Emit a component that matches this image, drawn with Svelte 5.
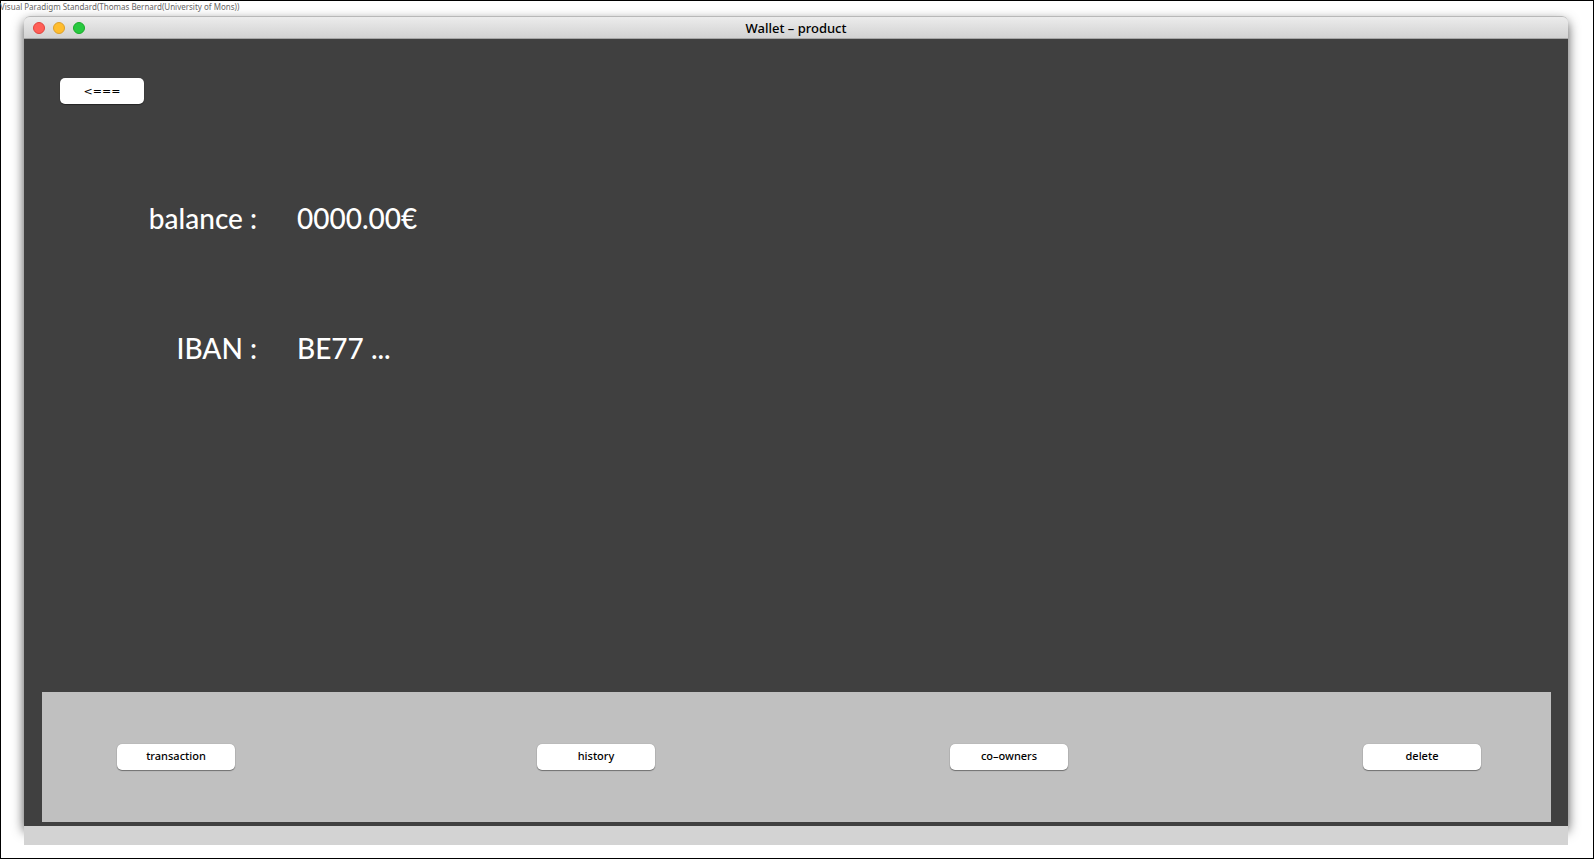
<script>
  const fields = [
    { label: 'balance :', value: '0000.00€' },
    { label: 'IBAN :', value: 'BE77 ...' }
  ];
  const actions = ['transaction', 'history', 'co–owners', 'delete'];
</script>

<div class="page">
  <p class="credit">Visual Paradigm Standard(Thomas Bernard(University of Mons))</p>
  <div class="frame">
    <section class="window">
      <header class="titlebar">
        <div class="lights">
          <button class="light close" aria-label="Close"></button>
          <button class="light minimize" aria-label="Minimize"></button>
          <button class="light zoom" aria-label="Zoom"></button>
        </div>
        <h1>Wallet – product</h1>
      </header>
      <main>
        <button class="btn back">&lt;===</button>
        <dl>
          {#each fields as field}
            <div class="field">
              <dt>{field.label}</dt>
              <dd>{field.value}</dd>
            </div>
          {/each}
        </dl>
        <nav>
          {#each actions as action}
            <button class="btn">{action}</button>
          {/each}
        </nav>
      </main>
    </section>
    <footer></footer>
  </div>
</div>

<style>
  :global(body) {
    background: #fff;
  }
  .page {
    box-sizing: border-box;
    min-height: 100vh;
    display: flex;
    flex-direction: column;
    border: 1px solid #000;
    padding: 0 25px 13px 23px;
    font-family: 'Noto Sans', 'Open Sans', sans-serif;
  }
  .credit {
    margin: 0 0 0 -24px;
    height: 15px;
    line-height: 12px;
    font-size: 8px;
    color: #666;
    white-space: nowrap;
  }
  .frame {
    flex: 1;
    display: flex;
    flex-direction: column;
  }
  .window {
    flex: 1;
    display: flex;
    flex-direction: column;
    border-radius: 6px 6px 0 0;
    box-shadow: 0 5px 12px rgba(0, 0, 0, 0.7);
  }
  .titlebar {
    box-sizing: border-box;
    height: 23px;
    display: grid;
    grid-template-columns: 1fr auto 1fr;
    align-items: center;
    padding: 0 9px;
    border-top: 1px solid #b8b8b8;
    border-bottom: 1px solid #a6a6a6;
    border-radius: 6px 6px 0 0;
    background: linear-gradient(#ececec, #d2d2d2);
  }
  .lights {
    display: flex;
    gap: 8px;
  }
  .light {
    box-sizing: border-box;
    width: 12px;
    height: 12px;
    padding: 0;
    border: 1px solid;
    border-radius: 50%;
  }
  .close {
    background: #ff5f57;
    border-color: #e0443e;
  }
  .minimize {
    background: #ffbd2e;
    border-color: #dba02c;
  }
  .zoom {
    background: #28c940;
    border-color: #1aab29;
  }
  h1 {
    margin: 0;
    font-size: 13px;
    line-height: 20px;
    font-weight: 500;
    color: #000;
  }
  main {
    flex: 1;
    display: flex;
    flex-direction: column;
    background: #404040;
    padding: 39px 17px 4px 18px;
  }
  .btn {
    width: 118px;
    height: 26px;
    padding: 0 0 3px;
    border: 0;
    border-radius: 5px;
    background: #fff;
    box-shadow: 0 1px 1px rgba(0, 0, 0, 0.4), 0 0 1px rgba(0, 0, 0, 0.3);
    font-family: inherit;
    font-size: 11px;
    font-weight: 500;
    color: #000;
  }
  .back {
    width: 84px;
    margin-left: 18px;
    padding: 0;
    font-family: 'DejaVu Sans', sans-serif;
  }
  dl {
    margin: 49px 0 0;
    color: #fff;
    font-family: Lato, sans-serif;
    font-size: 28px;
    font-weight: 500;
    line-height: 130px;
  }
  .field {
    display: grid;
    grid-template-columns: 215px 1fr;
    column-gap: 40px;
  }
  dt {
    text-align: right;
  }
  dd {
    margin: 0;
  }
  nav {
    display: grid;
    grid-template-columns: 420fr 413fr 413fr 118px;
    align-items: center;
    height: 130px;
    margin-top: auto;
    padding: 0 70px 0 75px;
    background: #c0c0c0;
  }
  footer {
    position: relative;
    height: 19px;
    background: #d3d3d3;
  }
</style>
